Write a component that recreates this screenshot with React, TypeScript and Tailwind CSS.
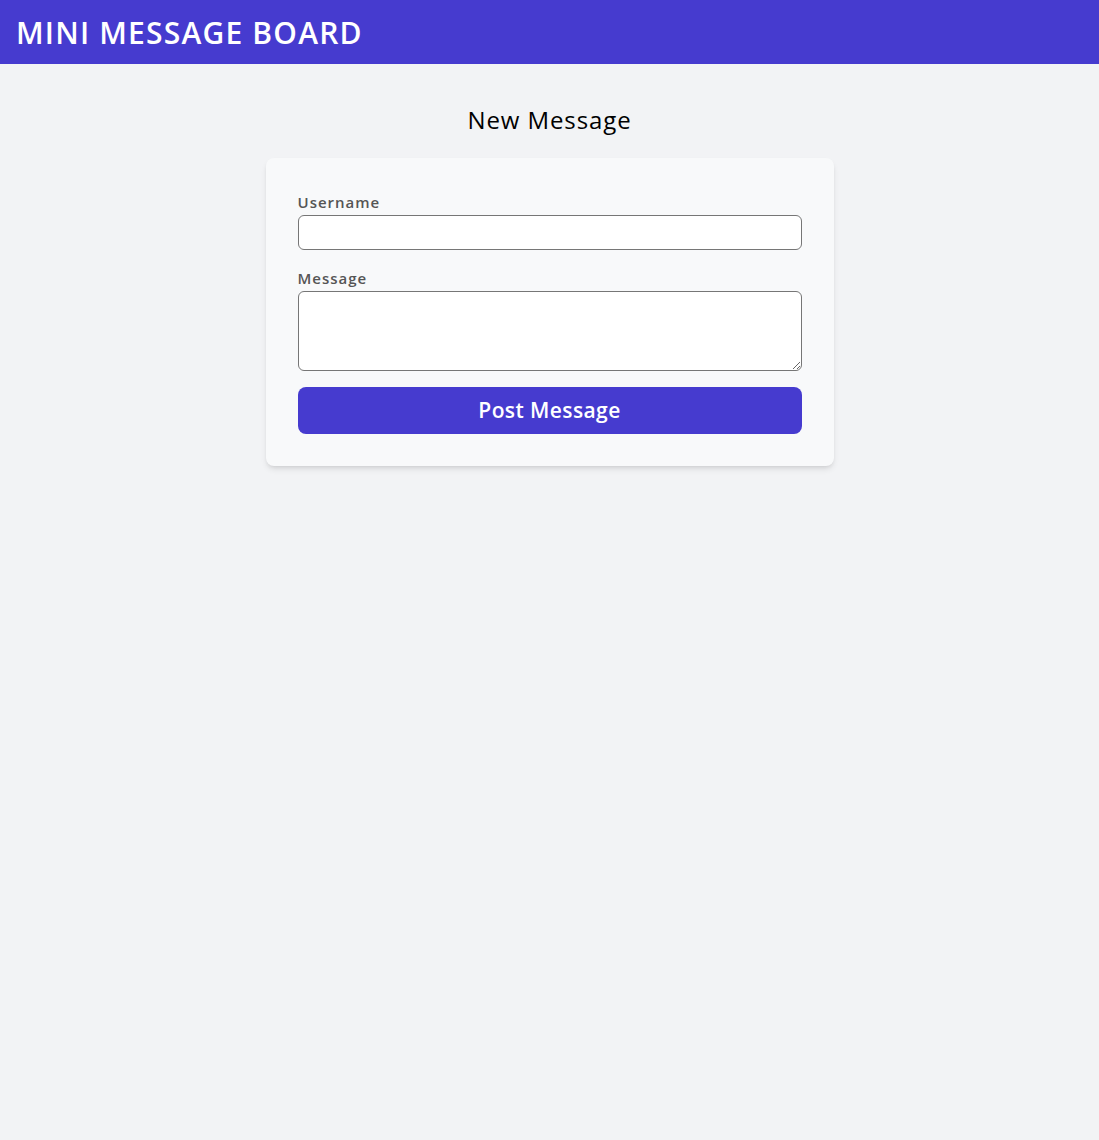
export default function App() {
  return (
    <div className="min-h-screen bg-[#f2f3f5] font-['Open_Sans',sans-serif]">
      <header className="h-16 bg-[#463bcf] px-4 flex items-center">
        <h1 className="text-[30px] font-semibold text-white tracking-[1.2px]">MINI MESSAGE BOARD</h1>
      </header>

      <main className="pt-10 flex flex-col items-center">
        <h2 className="text-2xl leading-8 text-black tracking-[0.9px] mb-[22px]">New Message</h2>

        <form
          className="w-[568px] bg-[#f8f9fa] rounded-lg shadow-md p-8 flex flex-col"
          onSubmit={(e) => e.preventDefault()}
        >
          <label htmlFor="username" className="text-[15px] leading-6 font-semibold text-[#555] tracking-[1px] mb-px">
            Username
          </label>
          <input
            id="username"
            type="text"
            className="h-[35px] bg-white border border-[#767676] rounded-md px-2 mb-4"
          />

          <label htmlFor="message" className="text-[15px] leading-6 font-semibold text-[#555] tracking-[1px] mb-px">
            Message
          </label>
          <textarea
            id="message"
            className="h-20 bg-white border border-[#767676] rounded-md px-2 mb-4"
          />

          <button
            type="submit"
            className="h-[47px] bg-[#463bcf] text-white text-[21px] font-semibold tracking-[0.4px] rounded-lg"
          >
            Post Message
          </button>
        </form>
      </main>
    </div>
  );
}
